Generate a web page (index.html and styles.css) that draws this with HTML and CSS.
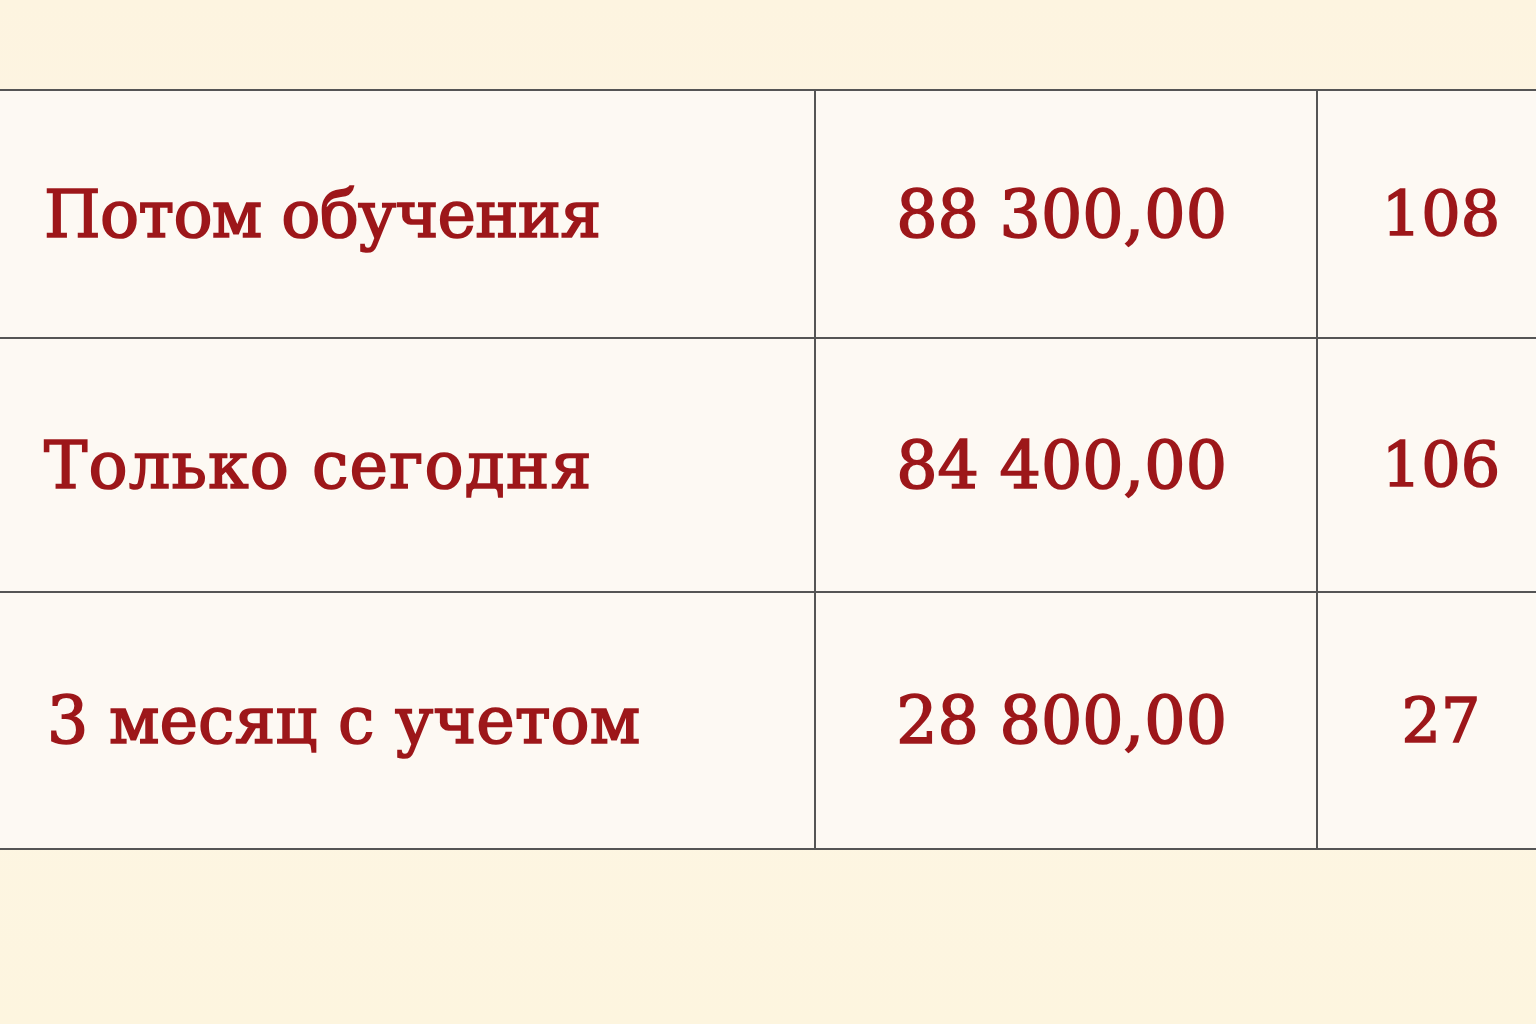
FILE: index.html
```html
<!DOCTYPE html>
<html lang="ru">
<head>
<meta charset="utf-8">
<title>Цены</title>
<link rel="stylesheet" href="styles.css">
</head>
<body>
<main class="page">
  <table class="prices">
    <colgroup>
      <col class="c-name">
      <col class="c-sum">
      <col class="c-count">
    </colgroup>
    <tr class="row r1">
      <td class="name">Потом обучения</td>
      <td class="sum">88 300,00</td>
      <td class="count">108</td>
    </tr>
    <tr class="row r2">
      <td class="name">Только сегодня</td>
      <td class="sum">84 400,00</td>
      <td class="count">106</td>
    </tr>
    <tr class="row r3">
      <td class="name">3 месяц с учетом</td>
      <td class="sum">28 800,00</td>
      <td class="count">27</td>
    </tr>
  </table>
</main>
</body>
</html>
```

FILE: styles.css
```css
html, body {
  margin: 0;
  padding: 0;
}
body {
  width: 1536px;
  height: 1024px;
  overflow: hidden;
  background: linear-gradient(180deg, #fdf4e0 0%, #fdf6e6 50%, #fdf5df 100%);
  font-family: "DejaVu Serif", serif;
}
.page {
  padding-top: 89px;
}
.prices {
  width: 1536px;
  table-layout: fixed;
  border-collapse: collapse;
  background: #fdf9f3;
  color: #9d171a;
  -webkit-text-stroke: 1.7px #9d171a;
  font-weight: 400;
  font-size: 65px;
  line-height: 1;
}
.c-name { width: 815px; }
.c-sum { width: 502px; }
.c-count { width: 219px; }
.prices td {
  border-top: 2px solid #555555;
  border-bottom: 2px solid #555555;
  padding: 0;
  vertical-align: middle;
  white-space: nowrap;
}
.r1 td { height: 246px; }
.r2 td { height: 252px; }
.r3 td { height: 255px; }
.name {
  padding-left: 44px !important;
  text-align: left;
  border-right: 2px solid #555555;
}
.sum {
  text-align: right;
  padding-right: 89px !important;
  border-right: 2px solid #555555;
}
.count {
  text-align: center;
  padding-left: 28px !important;
  font-size: 62px;
}
.r1 .name {
  letter-spacing: -0.8px;
}
.r2 .name {
  letter-spacing: 1.2px;
}
.r3 .name {
  padding-left: 47px !important;
}
```
